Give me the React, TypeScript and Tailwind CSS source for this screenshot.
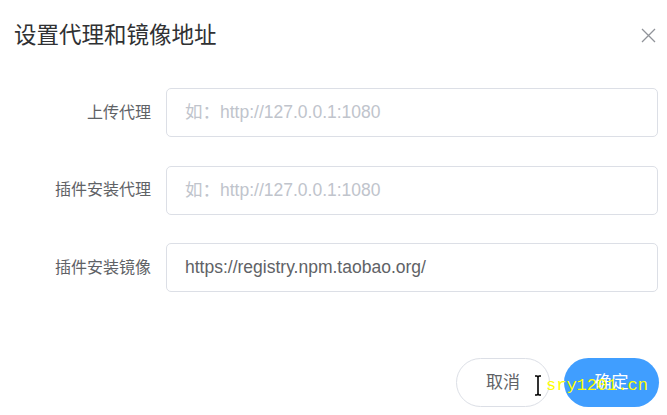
const font = {
  fontFamily: '"Liberation Sans", "Noto Sans CJK SC", sans-serif',
};

interface FieldProps {
  label: string;
  value?: string;
  placeholder?: string;
}

function Field({ label, value, placeholder }: FieldProps) {
  return (
    <div className="flex items-center h-[49px]">
      <label className="w-[166px] shrink-0 pr-[15px] text-right text-[16px] text-[#606266]">
        {label}
      </label>
      <input
        className="flex-1 mr-[9px] h-[49px] rounded-[5px] border border-[#dcdfe6] px-[18px] text-[17.5px] text-[#606266] outline-none placeholder:text-[#c0c4cc]"
        style={font}
        defaultValue={value}
        placeholder={placeholder}
      />
    </div>
  );
}

export default function App() {
  return (
    <div
      className="relative w-[667px] h-[415px] bg-white overflow-hidden"
      style={font}
    >
      <div className="flex items-center justify-between pl-[14px] pr-[11px] pt-[22px] h-[50px]">
        <h2 className="text-[22.5px] leading-[28px] text-[#303133]">设置代理和镜像地址</h2>
        <svg width="15" height="15" viewBox="0 0 15 15" className="mt-[-2px]">
          <path d="M1 1 L14 14 M14 1 L1 14" stroke="#909399" strokeWidth="1.3" fill="none" />
        </svg>
      </div>

      <div className="flex flex-col gap-[28.5px] mt-[38px]">
        <Field label="上传代理" placeholder="如：http://127.0.0.1:1080" />
        <Field label="插件安装代理" placeholder="如：http://127.0.0.1:1080" />
        <Field label="插件安装镜像" value="https://registry.npm.taobao.org/" />
      </div>

      <div className="flex justify-end gap-[14px] pr-[8px] mt-[66px]">
        <button className="w-[94px] h-[49px] rounded-full border border-[#dcdfe6] bg-white text-[17px] text-[#606266]">
          取消
        </button>
        <button className="w-[95px] h-[49px] rounded-full bg-[#409eff] text-[17px] text-white">
          确定
        </button>
      </div>

      {/* cursor + watermark from the capture */}
      <svg
        width="8"
        height="21"
        viewBox="0 0 8 21"
        className="absolute left-[534px] top-[375px]"
      >
        <path
          d="M1 1 H3 L4 2 L5 1 H7 M4 2 V19 M1 20 H3 L4 19 L5 20 H7"
          stroke="#000"
          strokeWidth="1.6"
          fill="none"
        />
      </svg>
      <span
        className="absolute left-[546px] top-[374px] text-[17px] leading-[24px] text-[#ffff00]"
        style={{ fontFamily: '"Liberation Mono", monospace' }}
      >
        sry1201.cn
      </span>
    </div>
  );
}
